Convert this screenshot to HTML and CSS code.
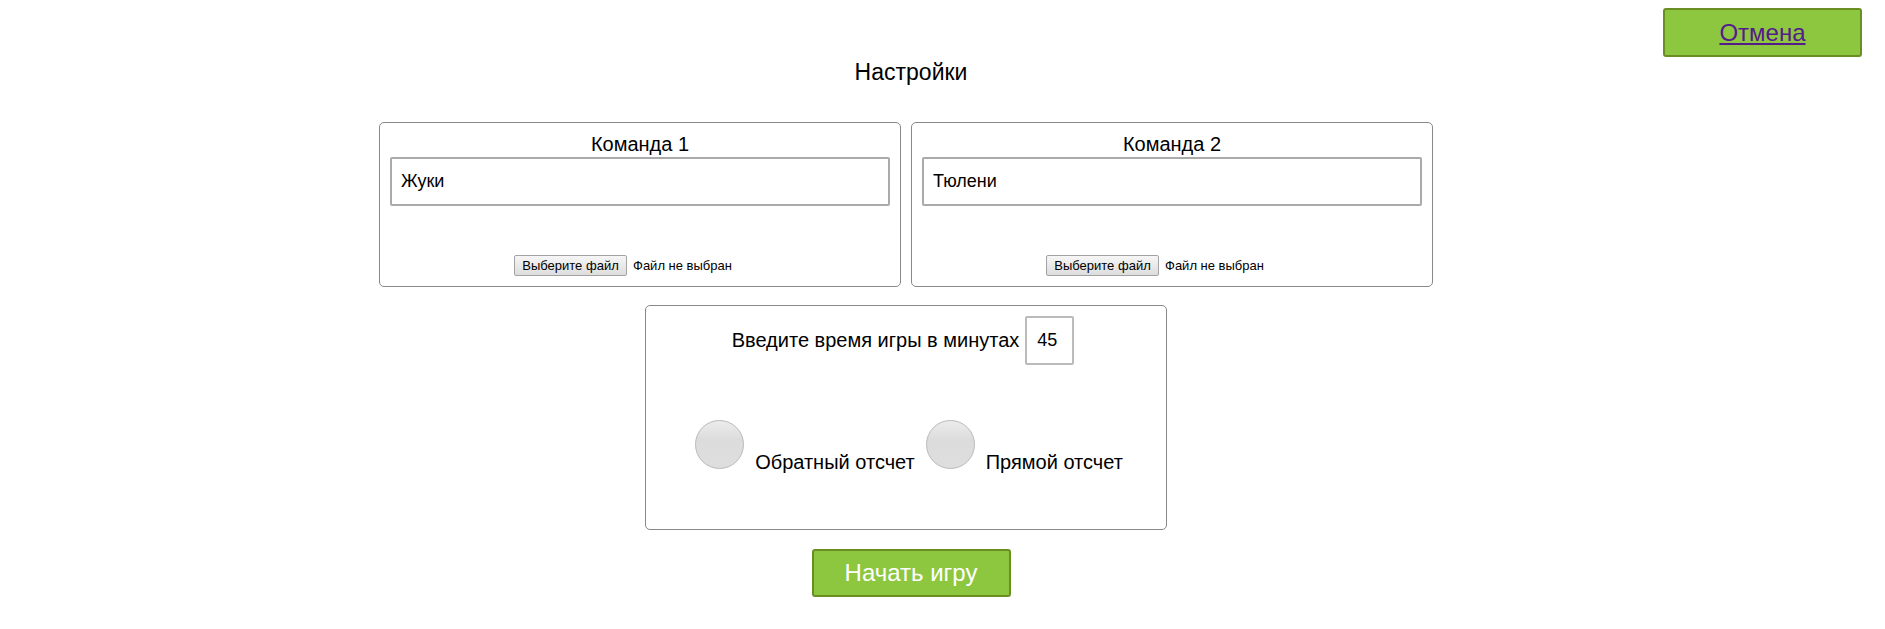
FILE: index.html
```
<!DOCTYPE html>
<html lang="ru">
<head>
    <meta charset="UTF-8">
    <meta name="viewport" content="width=device-width, initial-scale=1.0">
    <title>Настройки</title>
    <link rel="stylesheet" href="styles.css">
</head>
<body>
    <div class="top">
        <div class="btn btn-cancel"><a href="#">Отмена</a></div>
    </div>
    <div class="main">
        <h1>Настройки</h1>
        <div class="board">
            <div class="teams">
                <div class="panel team">
                    <h2>Команда 1</h2>
                    <input class="team-name" type="text" value="Жуки">
                    <div class="file">
                        <span class="file-btn">Выберите файл</span>
                        <span class="file-label">Файл не выбран</span>
                    </div>
                </div>
                <div class="panel team">
                    <h2>Команда 2</h2>
                    <input class="team-name" type="text" value="Тюлени">
                    <div class="file">
                        <span class="file-btn">Выберите файл</span>
                        <span class="file-label">Файл не выбран</span>
                    </div>
                </div>
            </div>
            <div class="panel time">
                <div class="time-row">
                    <label for="minutes">Введите время игры в минутах</label>
                    <input id="minutes" class="minutes" type="text" value="45">
                </div>
                <div class="options">
                    <label class="option"><input type="radio" name="mode"><span>Обратный отсчет</span></label>
                    <label class="option"><input type="radio" name="mode"><span>Прямой отсчет</span></label>
                </div>
            </div>
        </div>
        <div class="btn btn-start">Начать игру</div>
    </div>
</body>
</html>
```

FILE: styles.css
```
body {
    font-family: 'Liberation Sans', Arial, sans-serif;
    background-color: #fff;
    color: #000;
    margin: 0;
}

.top {
    display: flex;
    justify-content: flex-end;
    padding: 8px 23px 0 0;
}

.btn {
    width: 199px;
    box-sizing: border-box;
    background-color: #8dc63f;
    border: 2px solid #6b8e23;
    border-radius: 3px;
    display: flex;
    align-items: center;
    justify-content: center;
    font-size: 24px;
}

.btn-cancel {
    height: 49px;
}

.btn-cancel a {
    color: #551a8b;
    text-decoration: underline;
}

.main {
    display: flex;
    flex-direction: column;
    align-items: center;
    padding-right: 63px;
}

h1 {
    font-size: 23px;
    font-weight: normal;
    line-height: 26px;
    margin: 2px 0 0;
}

.board {
    display: flex;
    flex-direction: column;
    align-items: center;
    margin: 37px 10px 0 0;
}

.teams {
    display: flex;
    gap: 10px;
}

.panel {
    width: 522px;
    box-sizing: border-box;
    border: 1px solid #888;
    border-radius: 5px;
    padding: 10px;
    text-align: center;
}

.team h2 {
    font-size: 20px;
    font-weight: normal;
    line-height: 22px;
    margin: 0 0 2px;
}

.team-name {
    display: block;
    width: 100%;
    height: 49px;
    box-sizing: border-box;
    border: 2px solid #aaa;
    border-radius: 2px;
    padding: 0 9px;
    font-family: inherit;
    font-size: 18px;
    color: #000;
}

.file {
    display: inline-flex;
    align-items: center;
    gap: 6px;
    width: 252px;
    margin-top: 49px;
    font-size: 13px;
    vertical-align: top;
}

.file-btn {
    width: 113px;
    height: 21px;
    box-sizing: border-box;
    border: 1px solid #a3a3a3;
    border-radius: 2px;
    background: linear-gradient(#f6f6f6, #dddddd);
    display: flex;
    align-items: center;
    justify-content: center;
}

.time {
    margin-top: 18px;
}

.time-row {
    display: flex;
    justify-content: center;
    align-items: center;
    gap: 6px;
    padding-right: 6px;
    font-size: 20px;
}

.minutes {
    width: 49px;
    height: 49px;
    box-sizing: border-box;
    border: 2px solid #bbb;
    border-radius: 2px;
    padding: 0 10px;
    font-family: inherit;
    font-size: 18px;
    color: #000;
}

.options {
    display: flex;
    justify-content: center;
    gap: 11px;
    margin: 55px 0 45px;
    padding-left: 6px;
    font-size: 20px;
}

.option {
    display: flex;
    align-items: baseline;
}

.option input {
    appearance: none;
    -webkit-appearance: none;
    width: 49px;
    height: 49px;
    margin: 0 11px 0 0;
    border: 1px solid #b9b9b9;
    border-radius: 50%;
    background: linear-gradient(#ececec, #dcdcdc 40%, #dedede);
}

.btn-start {
    height: 48px;
    margin-top: 19px;
    color: #fff;
}
```
